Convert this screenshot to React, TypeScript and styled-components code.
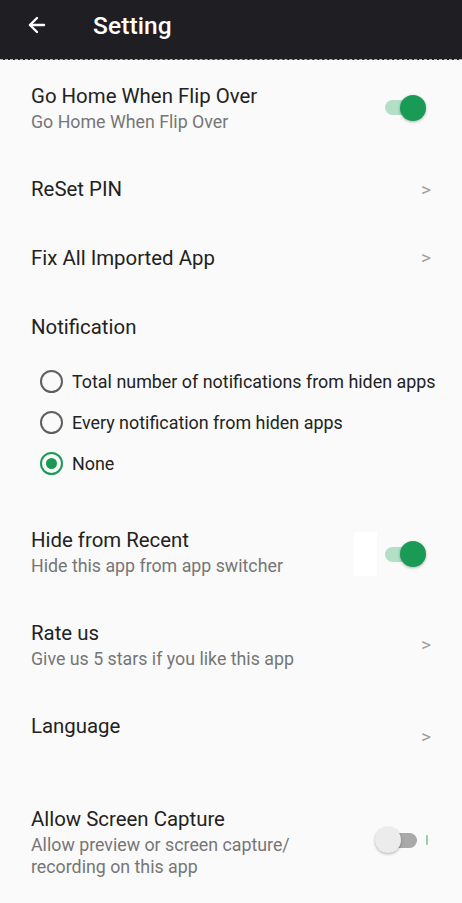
import React, { useState } from "react";
import styled, { createGlobalStyle } from "styled-components";
import { ArrowLeft } from "lucide-react";

const GlobalStyle = createGlobalStyle`
  html, body {
    margin: 0;
    padding: 0;
    background: #fafafa;
    font-family: Roboto, "Noto Sans", "Liberation Sans", sans-serif;
  }
  * {
    box-sizing: border-box;
  }
`;

const Page = styled.div`
  width: 462px;
  height: 903px;
  overflow: hidden;
  background: #fafafa;
`;

const Toolbar = styled.header`
  height: 60px;
  background: #1f1f23;
  display: flex;
  align-items: center;
  padding: 0 0 9px 25px;
  gap: 44px;
  border-bottom: 1px dashed #b8b8b8;
  color: #fff;
`;

const Title = styled.h1`
  margin: 0;
  font-size: 24.5px;
  font-weight: 500;
  letter-spacing: 0.1px;
`;

const Row = styled.div<{ $height: number }>`
  height: ${(p) => p.$height}px;
  display: flex;
  align-items: center;
  padding: 0 35px 0 31px;
`;

const Texts = styled.div<{ $offset?: number }>`
  flex: 1;
  display: flex;
  flex-direction: column;
  margin-top: ${(p) => p.$offset ?? 0}px;
`;

const Label = styled.div`
  font-size: 20.4px;
  line-height: 26px;
  color: #222222;
`;

const Hint = styled.div`
  font-size: 17.8px;
  line-height: 22px;
  color: #767676;
  margin-top: 2px;
`;

const Chevron = styled.span<{ $shift?: number }>`
  font-size: 19px;
  color: #9e9e9e;
  margin-right: -4px;
  margin-top: ${(p) => p.$shift ?? 0}px;
`;

const SwitchTrack = styled.button<{ $on: boolean; $shift?: number }>`
  position: relative;
  width: 34px;
  height: 15px;
  border: none;
  padding: 0;
  border-radius: 8px;
  background: ${(p) => (p.$on ? "#b3dfc6" : "#a9a9a9")};
  cursor: pointer;
  margin-right: ${(p) => (p.$on ? "8px" : "9px")};
  margin-top: ${(p) => p.$shift ?? 0}px;
`;

const SwitchKnob = styled.span<{ $on: boolean }>`
  position: absolute;
  top: 50%;
  left: ${(p) => (p.$on ? "15px" : "-8px")};
  width: 26px;
  height: 26px;
  margin-top: -13px;
  border-radius: 50%;
  background: ${(p) => (p.$on ? "#1a9b55" : "#ececec")};
  box-shadow: 0 1px 3px rgba(0, 0, 0, 0.3);
`;

const Glare = styled.div`
  width: 23px;
  height: 44px;
  background: #ffffff;
  margin-right: 8px;
  margin-top: 5px;
`;

const Sliver = styled.span`
  width: 2px;
  height: 10px;
  border-radius: 1px;
  background: #8fd3ad;
  margin-right: -1px;
`;

const RadioGroup = styled.div`
  display: flex;
  flex-direction: column;
  padding: 0 0 22px 40px;
`;

const RadioRow = styled.label`
  height: 41px;
  display: flex;
  align-items: center;
  gap: 9px;
  font-size: 17.9px;
  color: #222222;
  cursor: pointer;
`;

const RadioCircle = styled.span<{ $checked: boolean }>`
  width: 23px;
  height: 23px;
  border-radius: 50%;
  border: 2px solid ${(p) => (p.$checked ? "#1a9b55" : "#5f5f5f")};
  display: flex;
  align-items: center;
  justify-content: center;

  &::after {
    content: "";
    width: 11px;
    height: 11px;
    border-radius: 50%;
    background: ${(p) => (p.$checked ? "#1a9b55" : "transparent")};
  }
`;

const Switch = ({
  on,
  shift,
  onToggle,
}: {
  on: boolean;
  shift?: number;
  onToggle: () => void;
}) => (
  <SwitchTrack $on={on} $shift={shift} onClick={onToggle} aria-pressed={on}>
    <SwitchKnob $on={on} />
  </SwitchTrack>
);

const notificationOptions = [
  "Total number of notifications from hiden apps",
  "Every notification from hiden apps",
  "None",
];

export default function App() {
  const [flipHome, setFlipHome] = useState(true);
  const [hideRecent, setHideRecent] = useState(true);
  const [capture, setCapture] = useState(false);
  const [notify, setNotify] = useState(2);

  return (
    <Page>
      <GlobalStyle />
      <Toolbar>
        <ArrowLeft size={24} strokeWidth={2.4} color="#fff" />
        <Title>Setting</Title>
      </Toolbar>

      <Row $height={95}>
        <Texts $offset={0}>
          <Label>Go Home When Flip Over</Label>
          <Hint>Go Home When Flip Over</Hint>
        </Texts>
        <Switch on={flipHome} onToggle={() => setFlipHome(!flipHome)} />
      </Row>

      <Row $height={68}>
        <Texts>
          <Label>ReSet PIN</Label>
        </Texts>
        <Chevron>&gt;</Chevron>
      </Row>

      <Row $height={69}>
        <Texts>
          <Label>Fix All Imported App</Label>
        </Texts>
        <Chevron>&gt;</Chevron>
      </Row>

      <Row $height={69}>
        <Texts>
          <Label>Notification</Label>
        </Texts>
      </Row>

      <RadioGroup>
        {notificationOptions.map((opt, i) => (
          <RadioRow key={opt} onClick={() => setNotify(i)}>
            <RadioCircle $checked={notify === i} />
            {opt}
          </RadioRow>
        ))}
      </RadioGroup>

      <Row $height={91}>
        <Texts $offset={1}>
          <Label>Hide from Recent</Label>
          <Hint>Hide this app from app switcher</Hint>
        </Texts>
        <Glare />
        <Switch
          on={hideRecent}
          shift={5}
          onToggle={() => setHideRecent(!hideRecent)}
        />
      </Row>

      <Row $height={95}>
        <Texts $offset={1}>
          <Label>Rate us</Label>
          <Hint>Give us 5 stars if you like this app</Hint>
        </Texts>
        <Chevron>&gt;</Chevron>
      </Row>

      <Row $height={91}>
        <Texts $offset={-23}>
          <Label>Language</Label>
        </Texts>
        <Chevron $shift={-2}>&gt;</Chevron>
      </Row>

      <Row $height={114}>
        <Texts $offset={4}>
          <Label>Allow Screen Capture</Label>
          <Hint>
            Allow preview or screen capture/
            <br />
            recording on this app
          </Hint>
        </Texts>
        <Switch on={capture} onToggle={() => setCapture(!capture)} />
        <Sliver />
      </Row>
    </Page>
  );
}
